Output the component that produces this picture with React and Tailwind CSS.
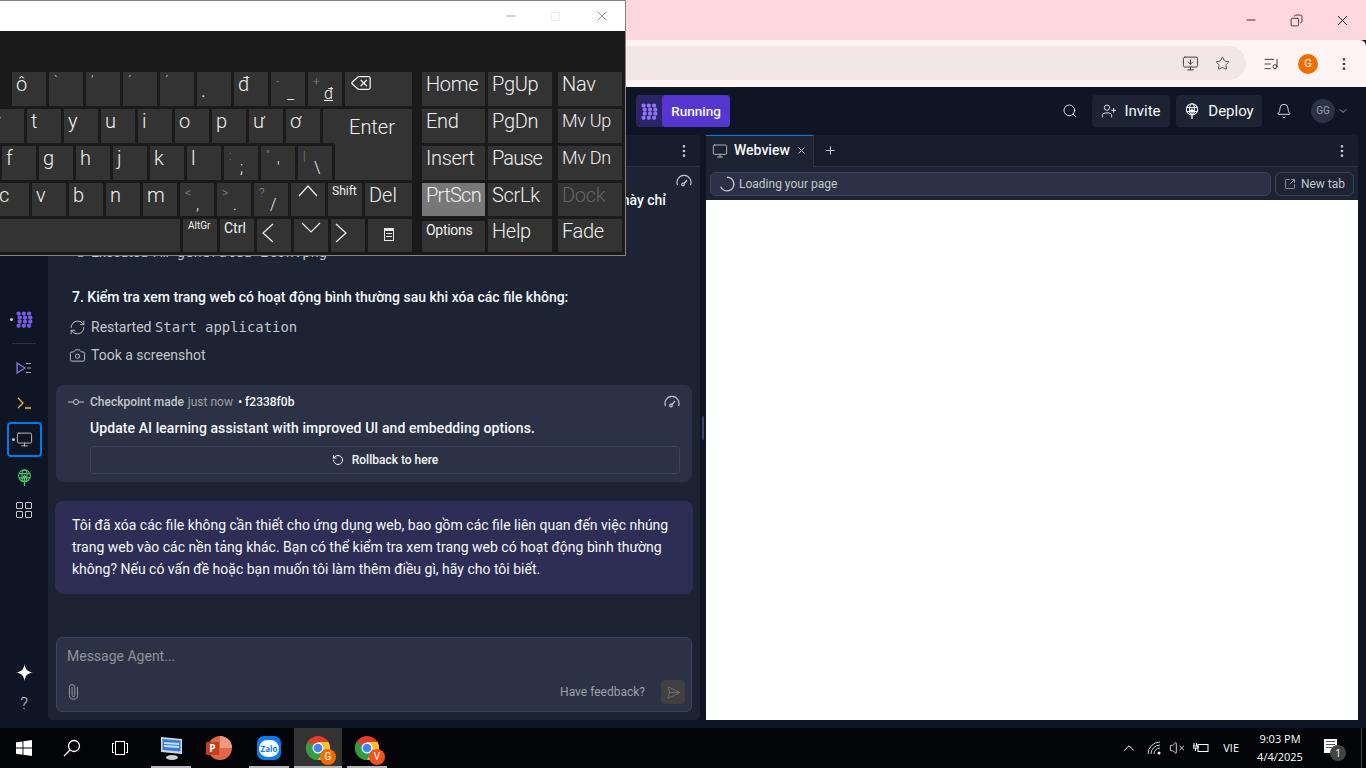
import { Search, UserPlus, Bell, ChevronDown, Monitor, X, Plus, EllipsisVertical, SquareArrowOutUpRight, RefreshCw, Camera, RotateCcw, Paperclip, SendHorizontal, Minus, Square, Copy, Star, ChevronUp, Delete, VolumeX, ListMusic, MonitorDown, Terminal } from "lucide-react";

// logo cham-cham ungu
function Logo({ size = 18, color = "#7c5ce6" }) {
    const dots = [];
    [0, 1, 2, 3].forEach((r) => {
        [0, 1, 2].forEach((c) => {
            dots.push(<circle key={`${r}-${c}`} cx={3 + c * 6.2 + (r === 1 || r === 2 ? 1.4 : 0)} cy={3 + r * 4.8} r="2.5" fill={color} />);
        });
    });
    return (
        <svg width={size} height={size} viewBox="0 0 20 20">{dots}</svg>
    );
}

function DeployIcon({ size = 18, color = "#c2c8cc" }) {
    return (
        <svg width={size} height={size} viewBox="0 0 20 20" fill="none" stroke={color} strokeWidth="1.3">
            <circle cx="10" cy="8" r="7" />
            <ellipse cx="10" cy="8" rx="3" ry="7" />
            <path d="M3.500 5.500h13 M3.500 10.500h13" />
            <path d="M10 20V8 M7 11l3-3 3 3" strokeWidth="1.6" />
        </svg>
    );
}

function GaugeIcon({ className = "" }) {
    return (
        <svg width="16" height="14" viewBox="0 0 16 14" fill="none" stroke="currentColor" strokeWidth="1.2" className={className}>
            <path d="M1.500 11a7 7 0 1 1 13 0" />
            <circle cx="7" cy="10.500" r="1.300" />
            <path d="M8 9.500l3-3.500" />
        </svg>
    );
}

function Key({ w = "w-[34px]", h = "h-[34px]", bg = "bg-[#333333]", className = "", children }) {
    return <div className={`${w} ${h} ${bg} shrink-0 relative text-[20px] leading-[24px] text-[#f0f0f0] pl-[4px] ${className}`}>{children}</div>;
}

// tombol dua label: kecil abu-abu di atas, besar di bawah
function Key2({ top, main, h }) {
    return (
        <Key h={h}>
            <span className="absolute left-[5px] top-[3px] text-[12px] leading-[14px] text-[#8a8a8a]">{top}</span>
            <span className="absolute left-[16px] top-[12px] text-[16px] leading-[20px]">{main}</span>
        </Key>
    );
}

function Tone({ children }) {
    return <Key><span className="absolute left-[5px] top-[1px] text-[13px] leading-[16px] text-[#d8d8d8]">{children}</span></Key>;
}

function Arrow({ d, className = "" }) {
    return (
        <svg width="24" height="24" viewBox="0 0 24 24" fill="none" stroke="#f0f0f0" strokeWidth="1.200" className={`absolute ${className}`}>
            <path d={d} />
        </svg>
    );
}

function Keyboard() {
    const plain = (list, h) => list.map((k) => <Key key={k} h={h}>{k}</Key>);
    return (
        <div className="absolute left-0 top-0 w-[626px] h-[256px] bg-[#1a1a1a] border-t border-r border-b border-[#8c7f86] overflow-hidden flex flex-col font-[Roboto,sans-serif] font-light">
            <div className="h-[30px] bg-white flex items-center justify-end text-[#555555] shrink-0">
                <Minus size={14} strokeWidth={1} className="mr-[32px]" />
                <Square size={11} strokeWidth={1} className="mr-[33px] text-[#cfcfcf]" />
                <X size={16} strokeWidth={1} className="mr-[15px]" />
            </div>
            <div className="flex pt-[41px] gap-[10px]">
                <div className="w-[412px] shrink-0 flex flex-col gap-[3px]">
                    <div className="flex justify-end gap-[3px]">
                        <Key>ô</Key>
                        <Tone>`</Tone>
                        <Tone>’</Tone>
                        <Tone>´</Tone>
                        <Tone>´</Tone>
                        <Key><span className="absolute left-[4px] top-[6px]">.</span></Key>
                        <Key>đ</Key>
                        <Key2 top="-" main="_" />
                        <Key2 top="+" main={<span className="underline">đ</span>} />
                        <Key w="w-[67px]"><Delete size={22} strokeWidth={1.4} className="absolute left-[5px] top-[0px]" /></Key>
                    </div>
                    <div className="flex justify-end gap-[3px]">
                        {plain(["r", "t", "y", "u", "i", "o", "p", "ư", "ơ"])}
                        <Key w="w-[89px]"><span className="absolute left-[26px] top-[6px]">Enter</span></Key>
                    </div>
                    <div className="flex justify-end gap-[3px]">
                        {plain(["f", "g", "h", "j", "k", "l"])}
                        <Key2 top=":" main=";" />
                        <Key2 top={'"'} main="'" />
                        <Key2 top="|" main="\" />
                        <Key w="w-[77px]" h="h-[37px]" className="-mt-[3px]" />
                    </div>
                    <div className="flex justify-end gap-[3px]">
                        {plain(["c", "v", "b", "n", "m"], "h-[33px]")}
                        <Key2 top="<" main="," h="h-[33px]" />
                        <Key2 top=">" main="." h="h-[33px]" />
                        <Key2 top="?" main="/" h="h-[33px]" />
                        <Key h="h-[33px]"><Arrow d="M3 13l9-10 9 10" className="left-[5px] top-0" /></Key>
                        <Key h="h-[33px]" className="!text-[12px] !leading-[16px] font-normal">Shift</Key>
                        <Key w="w-[47px]" h="h-[33px]">Del</Key>
                    </div>
                    <div className="flex justify-end gap-[3px]">
                        <Key w="w-[220px]" h="h-[33px]" />
                        <Key h="h-[33px]" className="!text-[10px] !leading-[14px] !pl-[5px] font-normal">AltGr</Key>
                        <Key h="h-[33px]" className="!text-[14px] !leading-[18px] font-normal">Ctrl</Key>
                        <Key h="h-[33px]"><Arrow d="M16 3L6 12l10 9" className="left-[0px] top-[2px]" /></Key>
                        <Key h="h-[33px]"><Arrow d="M3 3l9 9 9-9" className="left-[5px] top-[1px]" /></Key>
                        <Key h="h-[33px]"><Arrow d="M8 3l10 9-10 9" className="-left-[3px] top-[2px]" /></Key>
                        <Key w="w-[44px]" h="h-[33px]">
                            <div className="absolute left-[16px] top-[9px] w-[10px] h-[13px] border border-[#e8e8e8] border-t-[3px] flex flex-col gap-[2px] pt-[2px] px-[1px]">
                                <div className="h-px bg-[#e8e8e8]" />
                                <div className="h-px bg-[#e8e8e8]" />
                            </div>
                        </Key>
                    </div>
                </div>
                <div className="grid grid-cols-[63px_64px_64px] gap-x-[3px] gap-y-[3px] tracking-[-0.3px] [&>*:nth-child(3n)]:ml-[3px]">
                    <Key w="w-full">Home</Key><Key w="w-full">PgUp</Key><Key w="w-[64px]">Nav</Key>
                    <Key w="w-full">End</Key><Key w="w-full">PgDn</Key><Key w="w-[64px]" className="!text-[18px]">Mv Up</Key>
                    <Key w="w-full">Insert</Key><Key w="w-full" className="tracking-[-0.9px]">Pause</Key><Key w="w-[64px]" className="!text-[18px]">Mv Dn</Key>
                    <Key w="w-full" h="h-[33px]" bg="bg-[#777777]" className="tracking-[-0.7px]">PrtScn</Key><Key w="w-full" h="h-[33px]">ScrLk</Key><Key w="w-[64px]" h="h-[33px]" className="!text-[#666666]">Dock</Key>
                    <Key w="w-full" h="h-[31px]" className="mt-[2px] !text-[14px] !leading-[18px] font-normal">Options</Key><Key w="w-full" h="h-[33px]">Help</Key><Key w="w-[64px]" h="h-[33px]">Fade</Key>
                </div>
            </div>
        </div>
    );
}

function GridIcon() {
    return (
        <div className="grid grid-cols-2 gap-[2px]">
            <div className="w-[7px] h-[7px] border border-[#c2c8cc] rounded-[1px]" />
            <div className="w-[7px] h-[7px] border border-[#c2c8cc] rounded-[1px]" />
            <div className="w-[7px] h-[7px] border border-[#c2c8cc] rounded-[1px]" />
            <div className="w-[7px] h-[7px] border border-[#c2c8cc] rounded-[1px]" />
        </div>
    );
}

function Sidebar() {
    return (
        <div className="w-[48px] shrink-0 flex flex-col items-center pt-[170px] text-[#c2c8cc] relative">
            <div className="h-[28px] flex items-center justify-center relative">
                <span className="absolute -left-[6px] top-[13px] w-[3px] h-[3px] rounded-full bg-[#c2c8cc]" />
                <Logo size={17} />
            </div>
            <div className="mt-[10px] w-[24px] h-px bg-[#2b3245]" />
            <div className="mt-[7px] h-[34px] flex items-center text-[#8b7fe0]">
                <svg width="16" height="12" viewBox="0 0 16 12" fill="none" stroke="currentColor" strokeWidth="1.2">
                    <path d="M1 1l8 5-8 5z" />
                    <path d="M10 1.500h5 M11 6h4 M10 10.500h5" stroke="#9da2c0" />
                </svg>
            </div>
            <div className="mt-[1px] h-[34px] flex items-center text-[#e5b73b]">
                <svg width="14" height="12" viewBox="0 0 14 12" fill="none" stroke="currentColor" strokeWidth="1.3">
                    <path d="M1 1l5 5-5 5 M8 11h6" />
                </svg>
            </div>
            <div className="mt-[2px] ml-px w-[35px] h-[35px] border-2 border-[#0079f2] rounded-[4px] flex items-center justify-center relative">
                <span className="absolute left-[3px] top-[14px] w-[3px] h-[3px] rounded-full bg-[#c2c8cc]" />
                <Monitor size={17} strokeWidth={1.3} />
            </div>
            <div className="mt-[5px] h-[30px] flex items-center"><DeployIcon size={17} color="#4fc36e" /></div>
            <div className="mt-[3px] h-[30px] flex items-center"><GridIcon /></div>
            <div className="mt-auto h-[32px] flex items-center">
                <svg width="17" height="17" viewBox="0 0 17 17" fill="white"><path d="M8.500 0c.6 5 2.900 7.900 8.500 8.500-5.600.6-7.900 3.500-8.500 8.500-.6-5-2.900-7.900-8.500-8.500C5.600 7.900 7.900 5 8.500 0z" /></svg>
            </div>
            <div className="h-[32px] flex items-center text-[17px] font-light">?</div>
        </div>
    );
}

function ChatPanel() {
    return (
        <div className="w-[652px] shrink-0 bg-[#1c2333] rounded-[4px] flex flex-col text-[#f5f9fc] text-[14px] leading-[22px]">
            <div className="h-[32px] shrink-0 border-b border-[#2b3245] bg-[#171d2d] rounded-t-[4px] flex items-center justify-end pr-[8px] text-[#c2c8cc]">
                <EllipsisVertical size={16} />
            </div>
            <div className="flex justify-end pr-[8px] mt-[7px] h-[16px] text-[#c2c8cc]"><GaugeIcon /></div>
            <div className="text-right pr-[34px] -mt-[1px] h-[22px] font-medium">này chỉ</div>
            <div className="mt-[30px] ml-[24px] h-[22px] flex items-center gap-[6px] text-[#c2c8cc]">
                <Terminal size={13} />
                <span>Executed <span className="font-['DejaVu_Sans_Mono',monospace] text-[13.9px]">rm generated-icon.png</span></span>
            </div>
            <div className="mt-[23px] ml-[24px] h-[22px] font-medium">7. Kiểm tra xem trang web có hoạt động bình thường sau khi xóa các file không:</div>
            <div className="mt-[8px] ml-[21px] h-[22px] flex items-center gap-[5px] text-[#c2c8cc]">
                <RefreshCw size={17} strokeWidth={1.3} />
                <span>Restarted <span className="font-['DejaVu_Sans_Mono',monospace] text-[13.9px]">Start application</span></span>
            </div>
            <div className="mt-[6px] ml-[21px] h-[22px] flex items-center gap-[5px] text-[#c2c8cc]">
                <Camera size={17} strokeWidth={1.3} />
                <span>Took a screenshot</span>
            </div>
            <div className="mt-[19px] mx-[8px] h-[97px] bg-[#2b3245] rounded-[8px] pt-[7px] pl-[12px] pr-[12px] flex flex-col">
                <div className="h-[20px] flex items-center text-[12px] leading-[16px] text-[#c2c8cc]">
                    <svg width="16" height="8" viewBox="0 0 16 8" fill="none" stroke="currentColor" className="mr-[6px]">
                        <circle cx="8" cy="4" r="2.500" />
                        <path d="M0 4h5 M11 4h5" />
                    </svg>
                    <span className="font-medium">Checkpoint made</span>
                    <span className="ml-[4px] text-[#9da2a6]">just now</span>
                    <span className="ml-[5px] font-medium text-[#f5f9fc]">• f2338f0b</span>
                    <GaugeIcon className="ml-auto -mt-[1px]" />
                </div>
                <div className="ml-[22px] mt-[5px] h-[22px] font-medium tracking-[0.08px]">Update AI learning assistant with improved UI and embedding options.</div>
                <div className="ml-[22px] mt-[7px] h-[28px] border border-[#3c445c] rounded-[4px] flex items-center justify-center gap-[8px] text-[12px] font-medium">
                    <RotateCcw size={12} />
                    <span>Rollback to here</span>
                </div>
            </div>
            <div className="mt-[19px] mx-[7px] h-[93px] bg-[#2e2d55] rounded-[8px] pt-[13px] px-[17px]">
                Tôi đã xóa các file không cần thiết cho ứng dụng web, bao gồm các file liên quan đến việc nhúng<br />
                trang web vào các nền tảng khác. Bạn có thể kiểm tra xem trang web có hoạt động bình thường<br />
                không? Nếu có vấn đề hoặc bạn muốn tôi làm thêm điều gì, hãy cho tôi biết.
            </div>
            <div className="mt-[43px] mx-[8px] h-[75px] bg-[#2b3245] border border-[#3c445c] rounded-[6px] flex flex-col pl-[10px] pr-[6px] pt-[7px]">
                <div className="text-[#8d949b]">Message Agent...</div>
                <div className="mt-auto mb-[7px] flex items-center text-[#9da2a6]">
                    <Paperclip size={16} strokeWidth={1.3} className="-rotate-45 -ml-[2px]" />
                    <span className="ml-auto text-[12px]">Have feedback?</span>
                    <div className="ml-[16px] w-[24px] h-[24px] rounded-[4px] bg-[#404040] flex items-center justify-center text-[#777777]">
                        <SendHorizontal size={15} strokeWidth={1.3} />
                    </div>
                </div>
            </div>
        </div>
    );
}

function WebviewPanel() {
    return (
        <div className="w-[652px] shrink-0 bg-[#1c2333] rounded-t-[4px] flex flex-col">
            <div className="h-[32px] shrink-0 flex bg-[#171d2d] border-b border-[#2b3245] rounded-t-[4px]">
                <div className="w-[108px] h-[32px] bg-[#1c2333] border-t border-t-[#0079f2] border-r border-r-[#2b3245] flex items-center pb-[2px] pl-[6px] text-[14px] font-medium text-[#f5f9fc]">
                    <Monitor size={16} strokeWidth={1.3} className="text-[#c2c8cc]" />
                    <span className="ml-[6px]">Webview</span>
                    <X size={11} className="ml-auto mr-[6px] text-[#c2c8cc]" />
                </div>
                <Plus size={13} className="ml-[10px] mt-[9px] text-[#c2c8cc]" />
                <EllipsisVertical size={16} className="ml-auto mr-[8px] mt-[8px] text-[#c2c8cc]" />
            </div>
            <div className="h-[33px] shrink-0 flex items-center px-[4px] gap-[4px] text-[12px]">
                <div className="flex-1 h-[24px] bg-[#2b3245] border border-[#3c445c] rounded-[6px] flex items-center pl-[8px] gap-[4px] text-[#c2c8cc]">
                    <svg width="16" height="16" viewBox="0 0 14 14" fill="none" stroke="currentColor" strokeWidth="1.300"><path d="M7 1a6 6 0 1 1-5.500 8.400" /></svg>
                    <span>Loading your page</span>
                </div>
                <div className="w-[79px] h-[24px] border border-[#3c445c] rounded-[6px] flex items-center justify-center gap-[5px] text-[#c2c8cc]">
                    <SquareArrowOutUpRight size={12} strokeWidth={1.3} />
                    <span>New tab</span>
                </div>
            </div>
            <div className="flex-1 bg-white" />
        </div>
    );
}

function ChromeTaskIcon({ letter, badge }) {
    return (
        <div className="relative w-[24px] h-[24px]">
            <svg width="24" height="24" viewBox="0 0 24 24">
                <circle cx="12" cy="12" r="12" fill="#e33b2e" />
                <path d="M12 12L1.600 6A12 12 0 0 0 12 24l6-10z" fill="#2f9e44" />
                <path d="M12 12l6 2-6 10A12 12 0 0 0 22.400 6H12z" fill="#fbc02d" />
                <circle cx="12" cy="12" r="5.500" fill="white" />
                <circle cx="12" cy="12" r="4.300" fill="#4285f4" />
            </svg>
            <span className={`absolute -right-[6px] -bottom-[5px] w-[16px] h-[16px] rounded-full ${badge} text-white text-[10px] leading-[16px] text-center font-[Roboto,sans-serif]`}>{letter}</span>
        </div>
    );
}

function TaskItem({ active, line, children, w = "w-[48px]", className = "" }) {
    return (
        <div className={`${w} h-[40px] shrink-0 flex items-center justify-center relative ${active ? "bg-[#333333]" : ""} ${className}`}>
            {children}
            {line && <span className={`absolute bottom-0 h-[2px] bg-[#b5b5b5] ${active ? "w-full" : "w-[40px]"}`} />}
        </div>
    );
}

function Taskbar() {
    return (
        <div className="h-[40px] shrink-0 bg-[#020408] flex items-center text-white font-['Open_Sans',sans-serif]">
            <TaskItem>
                <svg width="16" height="16" viewBox="0 0 16 16" fill="white"><path d="M0 2.300l6.500-.9v6.200H0z M7.400 1.300L16 0v7.600H7.400z M0 8.500h6.500v6.200L0 13.800z M7.400 8.500H16V16l-8.600-1.200z" /></svg>
            </TaskItem>
            <TaskItem>
                <svg width="18" height="18" viewBox="0 0 18 18" fill="none" stroke="white" strokeWidth="1.300"><circle cx="11" cy="7" r="5.500" /><path d="M7 11l-6 6" /></svg>
            </TaskItem>
            <TaskItem>
                <div className="w-[10px] h-[14px] border border-white relative">
                    <span className="absolute -left-[4px] top-[1px] w-[2px] h-[10px] border border-r-0 border-white" />
                    <span className="absolute -right-[4px] top-[1px] w-[2px] h-[10px] border border-l-0 border-white" />
                </div>
            </TaskItem>
            <div className="w-[3px]" />
            <TaskItem line>
                <svg width="26" height="26" viewBox="0 0 26 26">
                    <path d="M3 2l21 2v15L3 17z" fill="#cfd8e3" />
                    <path d="M4.500 4l18 1.500v11L4.500 15z" fill="#3a7bd5" />
                    <path d="M6 7l15 1v2L6 9z M6 10l15 1v2L6 12z" fill="#bfe3f7" />
                    <ellipse cx="14" cy="22.500" rx="6" ry="2.500" fill="#d0d0d0" />
                </svg>
            </TaskItem>
            <TaskItem>
                <div className="relative w-[24px] h-[24px] ml-[2px]">
                    <div className="absolute inset-0 rounded-full bg-[#e1674a]" />
                    <div className="absolute right-0 top-0 w-[12px] h-[12px] rounded-tr-full bg-[#ee9a82]" />
                    <div className="absolute -left-[2px] top-[6px] w-[13px] h-[13px] rounded-[1px] bg-[#c43e1c] text-white text-[10px] leading-[13px] font-bold text-center">P</div>
                </div>
            </TaskItem>
            <TaskItem line className="ml-[2px]">
                <div className="w-[24px] h-[24px] rounded-[7px] bg-[#0a7cf0] flex items-center justify-center relative">
                    <div className="w-[20px] h-[17px] rounded-full bg-white text-[#0a7cf0] text-[8px] leading-[17px] font-bold text-center">Zalo</div>
                </div>
            </TaskItem>
            <div className="w-[1px]" />
            <TaskItem active line><ChromeTaskIcon letter="G" badge="bg-[#ef6c00]" /></TaskItem>
            <TaskItem line w="w-[40px]" className="ml-[5px]"><ChromeTaskIcon letter="V" badge="bg-[#f4511e]" /></TaskItem>

            {/* tray */}
            <div className="ml-auto flex items-center text-white h-full">
                <ChevronUp size={18} strokeWidth={1.3} className="mr-[9px]" />
                <svg width="14" height="14" viewBox="0 0 14 14" fill="none" stroke="#d0d0d0" strokeWidth="1" className="mr-[8px]">
                    <path d="M1 13a12 12 0 0 1 12-12 M4 13a9 9 0 0 1 9-9 M7 13a6 6 0 0 1 6-6" />
                    <circle cx="12" cy="12" r="1.500" fill="white" stroke="none" />
                </svg>
                <VolumeX size={16} strokeWidth={1.2} className="mr-[8px]" />
                <svg width="16" height="12" viewBox="0 0 16 12" fill="none" stroke="white" strokeWidth="1" className="mr-[14px]">
                    <rect x="5" y="2.500" width="10" height="7" />
                    <path d="M1 1v3 M3.500 1v3 M0 4h5v2H0z M2.500 6v3" />
                </svg>
                <span className="text-[11px] mr-[11px]">VIE</span>
                <div className="w-[60px] text-center text-[11px] leading-[18px] mr-[14px]">
                    <div>9:03 PM</div>
                    <div>4/4/2025</div>
                </div>
                <div className="relative mr-[24px] w-[13px] h-[14px] bg-white -mt-[4px] flex flex-col gap-[2px] px-[2px] pt-[2px]">
                    <div className="h-px bg-[#555555]" />
                    <div className="h-px bg-[#555555]" />
                    <div className="h-px bg-[#555555]" />
                    <span className="absolute -right-[9px] -bottom-[8px] w-[16px] h-[16px] rounded-full bg-[#444444] text-[10px] leading-[16px] text-center">1</span>
                </div>
                <div className="w-px h-full bg-[#444444] mr-[4px]" />
            </div>
        </div>
    );
}

export default function App() {
    return (
        <div className="relative w-[1366px] h-[768px] overflow-hidden flex flex-col bg-[#0e1525] font-[Roboto,sans-serif]">
            {/* title bar chrome */}
            <div className="h-[40px] shrink-0 bg-[#ffd7de] flex items-center justify-end text-[#111111]">
                <Minus size={14} strokeWidth={1.4} className="mr-[32px]" />
                <Copy size={13} strokeWidth={1.4} className="mr-[31px] -scale-x-100" />
                <X size={17} strokeWidth={1.3} className="mr-[15px]" />
            </div>
            {/* toolbar */}
            <div className="h-[47px] shrink-0 bg-[#fff4f3] rounded-t-[6px] flex items-center pr-[14px] text-[#4a3a40]">
                <div className="w-[1246px] h-[34px] mt-[-1px] bg-[#f3e6e9] rounded-r-full flex items-center justify-end pr-[16px] gap-[16px]">
                    <MonitorDown size={17} strokeWidth={1.4} />
                    <Star size={15} strokeWidth={1.4} />
                </div>
                <ListMusic size={16} strokeWidth={1.5} className="ml-[17px]" />
                <div className="ml-[19px] w-[20px] h-[20px] rounded-full bg-[#ef6c00] text-white text-[11px] leading-[20px] text-center">G</div>
                <EllipsisVertical size={16} strokeWidth={2} className="ml-[18px]" />
            </div>
            {/* header replit */}
            <div className="h-[48px] shrink-0 flex items-center pl-[636px] pr-[17px] text-[15px] text-[#f5f9fc]">
                <div className="h-[32px] w-[94px] rounded-[4px] bg-[#2b2568] flex">
                    <div className="w-[26px] flex items-center justify-center"><Logo size={17} color="#8f74f5" /></div>
                    <div className="flex-1 rounded-[4px] bg-[#5536cf] text-center leading-[32px] font-medium text-[13.5px]">Running</div>
                </div>
                <Search size={16} strokeWidth={1.3} className="ml-auto mr-[14px]" />
                <div className="h-[32px] w-[78px] rounded-[4px] bg-[#1c2333] flex items-center justify-center gap-[7px]">
                    <UserPlus size={16} strokeWidth={1.3} />
                    <span>Invite</span>
                </div>
                <div className="ml-[6px] h-[32px] w-[86px] rounded-[4px] bg-[#1c2333] flex items-center justify-center gap-[8px]">
                    <DeployIcon size={16} color="#f5f9fc" />
                    <span>Deploy</span>
                </div>
                <Bell size={16} strokeWidth={1.3} className="ml-[14px]" />
                <div className="ml-[19px] w-[24px] h-[24px] rounded-full bg-[#2b3245] text-[#9da2a6] text-[10px] leading-[24px] text-center">GG</div>
                <ChevronDown size={12} className="ml-[2px] text-[#9da2a6]" />
            </div>
            {/* isi */}
            <div className="flex-1 flex min-h-0 pb-[8px]">
                <Sidebar />
                <ChatPanel />
                <div className="w-[6px] shrink-0 flex items-center justify-center">
                    <div className="w-[2px] h-[24px] bg-[#3c445c] rounded" />
                </div>
                <WebviewPanel />
            </div>
            <Taskbar />
            <Keyboard />
        </div>
    );
}
